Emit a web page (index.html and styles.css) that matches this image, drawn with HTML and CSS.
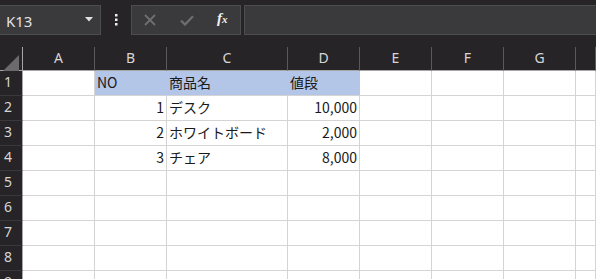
FILE: index.html
```html
<!DOCTYPE html>
<html lang="ja">
<head>
    <meta charset="UTF-8">
    <title>Book1 - Excel</title>
    <link rel="stylesheet" href="styles.css">
</head>
<body>
    <!-- Formula bar -->
    <div class="formula-bar">
        <div class="name-box">
            <span>K13</span>
            <svg class="caret" width="8" height="5" viewBox="0 0 8 5"><polygon points="0,0 8,0 4,4.5" fill="#e0e0e0"/></svg>
        </div>
        <div class="more">
            <svg width="3" height="12" viewBox="0 0 3 12">
                <rect x="0" y="0" width="2.5" height="2.5" fill="#f0f0f0"/>
                <rect x="0" y="4.5" width="2.5" height="2.5" fill="#f0f0f0"/>
                <rect x="0" y="9" width="2.5" height="2.5" fill="#f0f0f0"/>
            </svg>
        </div>
        <div class="fx-buttons">
            <svg class="btn-icon" width="12" height="12" viewBox="0 0 12 12">
                <path d="M1 1 L11 11 M11 1 L1 11" stroke="#6f6e71" stroke-width="1.8" fill="none"/>
            </svg>
            <svg class="btn-icon" width="14" height="11" viewBox="0 0 14 11">
                <path d="M1 5.5 L5 9.5 L13 1.2" stroke="#6f6e71" stroke-width="2.2" fill="none"/>
            </svg>
            <span class="fx">f<small>x</small></span>
        </div>
        <div class="formula-input"></div>
    </div>

    <!-- Sheet grid -->
    <div class="sheet">
        <div class="corner"><span class="corner-tri"></span></div>
        <div class="col-head">A</div>
        <div class="col-head">B</div>
        <div class="col-head">C</div>
        <div class="col-head">D</div>
        <div class="col-head">E</div>
        <div class="col-head">F</div>
        <div class="col-head">G</div>
        <div class="col-head"></div>

        <div class="row-head">1</div>
        <div class="cell"></div>
        <div class="cell fill">NO</div>
        <div class="cell fill">商品名</div>
        <div class="cell fill">値段</div>
        <div class="cell"></div>
        <div class="cell"></div>
        <div class="cell"></div>
        <div class="cell"></div>

        <div class="row-head">2</div>
        <div class="cell"></div>
        <div class="cell num">1</div>
        <div class="cell">デスク</div>
        <div class="cell num">10,000</div>
        <div class="cell"></div>
        <div class="cell"></div>
        <div class="cell"></div>
        <div class="cell"></div>

        <div class="row-head">3</div>
        <div class="cell"></div>
        <div class="cell num">2</div>
        <div class="cell">ホワイトボード</div>
        <div class="cell num">2,000</div>
        <div class="cell"></div>
        <div class="cell"></div>
        <div class="cell"></div>
        <div class="cell"></div>

        <div class="row-head">4</div>
        <div class="cell"></div>
        <div class="cell num">3</div>
        <div class="cell">チェア</div>
        <div class="cell num">8,000</div>
        <div class="cell"></div>
        <div class="cell"></div>
        <div class="cell"></div>
        <div class="cell"></div>

        <div class="row-head">5</div>
        <div class="cell"></div><div class="cell"></div><div class="cell"></div><div class="cell"></div>
        <div class="cell"></div><div class="cell"></div><div class="cell"></div><div class="cell"></div>

        <div class="row-head">6</div>
        <div class="cell"></div><div class="cell"></div><div class="cell"></div><div class="cell"></div>
        <div class="cell"></div><div class="cell"></div><div class="cell"></div><div class="cell"></div>

        <div class="row-head">7</div>
        <div class="cell"></div><div class="cell"></div><div class="cell"></div><div class="cell"></div>
        <div class="cell"></div><div class="cell"></div><div class="cell"></div><div class="cell"></div>

        <div class="row-head">8</div>
        <div class="cell"></div><div class="cell"></div><div class="cell"></div><div class="cell"></div>
        <div class="cell"></div><div class="cell"></div><div class="cell"></div><div class="cell"></div>

        <div class="row-head">9</div>
        <div class="cell"></div><div class="cell"></div><div class="cell"></div><div class="cell"></div>
        <div class="cell"></div><div class="cell"></div><div class="cell"></div><div class="cell"></div>
    </div>
</body>
</html>
```

FILE: styles.css
```css
:root {
    --dark-bg: #262427;
    --box-bg: #3a393c;
    --box-border: #4d4c4f;
    --head-text: #d6d6d6;
    --grid-line: #d4d4d4;
    --head-line: #a6a6a6;
    --fill-blue: #b4c6e7;
}

* {
    margin: 0;
    padding: 0;
    box-sizing: border-box;
}

body {
    background-color: var(--dark-bg);
    overflow: hidden;
    font-family: "Noto Sans", "Noto Sans CJK JP", sans-serif;
}

/* ---- formula bar ---- */
.formula-bar {
    display: flex;
    height: 47px;
    padding-top: 5px;
    padding-bottom: 12px;
}

.name-box {
    width: 101px;
    display: flex;
    align-items: center;
    justify-content: space-between;
    padding: 2px 7px 0 6px;
    background-color: var(--box-bg);
    border: 1px solid var(--box-border);
    border-left: none;
    color: #e2e2e2;
    font-size: 15px;
}

.name-box .caret {
    margin-top: -3px;
}

.more {
    width: 30px;
    display: flex;
    align-items: center;
    justify-content: center;
    margin-top: -1px;
}

.fx-buttons {
    width: 110px;
    display: flex;
    align-items: center;
    padding-left: 12px;
    gap: 0;
    background-color: var(--box-bg);
    border: 1px solid var(--box-border);
}

.btn-icon {
    margin-right: 24px;
}

.btn-icon + .btn-icon {
    margin-right: 23px;
}

.fx {
    font-family: "Liberation Serif", serif;
    font-style: italic;
    font-weight: bold;
    font-size: 15px;
    color: #f2f2f2;
    margin-top: -4px;
}

.fx small {
    font-size: 11px;
}

.formula-input {
    flex: 1;
    margin-left: 3px;
    background-color: var(--box-bg);
    border: 1px solid var(--box-border);
    border-right: none;
}

/* ---- sheet ---- */
.sheet {
    display: grid;
    grid-template-columns: 23px 72px 72px 121px 72px 72px 72px 72px 1fr;
    grid-template-rows: 24px repeat(9, 25px);
    background-color: #fff;
}

.corner,
.col-head {
    background-color: var(--dark-bg);
    border-bottom: 1px solid var(--head-line);
}

.corner {
    border-right: 1px solid var(--head-line);
    position: relative;
}

.corner-tri {
    position: absolute;
    left: 3px;
    top: 8px;
    width: 0;
    height: 0;
    border-left: 16px solid transparent;
    border-bottom: 16px solid #6b6a6d;
}

.col-head {
    border-right: 1px solid #5a595c;
    color: var(--head-text);
    font-size: 14px;
    line-height: 20px;
    padding-top: 1px;
    text-align: center;
}

.row-head {
    background-color: var(--dark-bg);
    border-right: 1px solid var(--head-line);
    border-bottom: 1px solid #39383b;
    color: var(--head-text);
    font-size: 14px;
    line-height: 20px;
    padding: 1px 0 0 4px;
}

.cell {
    border-right: 1px solid var(--grid-line);
    border-bottom: 1px solid var(--grid-line);
    font-family: "Noto Sans CJK JP", sans-serif;
    font-size: 14px;
    line-height: 20px;
    padding: 1px 2px 0 2px;
    color: #1a1a1a;
    white-space: nowrap;
    overflow: hidden;
}

.cell.num {
    text-align: right;
    padding-right: 2px;
}

.cell.fill {
    background-color: var(--fill-blue);
    border-right-color: var(--fill-blue);
}
```
